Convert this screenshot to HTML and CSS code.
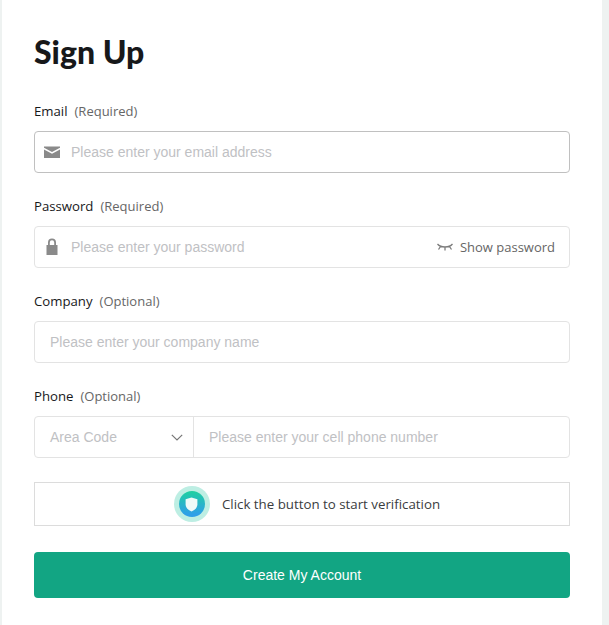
FILE: index.html
```html
<!DOCTYPE html>
<html lang="en">
<head>
<meta charset="utf-8">
<title>Sign Up</title>
<link rel="stylesheet" href="styles.css">
</head>
<body>
<main class="card">
  <h1 class="title">Sign Up</h1>
  <form class="form">
    <div class="field">
      <label class="label">Email<span class="hint">(Required)</span></label>
      <div class="box box-active">
        <svg class="lead-icon" viewBox="0 0 16 14" width="16" height="14"><path d="M0 1.500h16v1.200L8 7 0 2.700zM0 4.400 8 8.700l8-4.300V13H0z" fill="#8a8a8a"/></svg>
        <input class="input" type="text" placeholder="Please enter your email address">
      </div>
    </div>
    <div class="field">
      <label class="label">Password<span class="hint">(Required)</span></label>
      <div class="box">
        <svg class="lead-icon" viewBox="0 0 16 18" width="16" height="18"><path d="M8 .5a4 4 0 0 0-4 4V7H2.500v10h11V7H12V4.500a4 4 0 0 0-4-4zM10.200 7H5.800V4.500a2.200 2.200 0 0 1 4.400 0z" fill="#8a8a8a"/></svg>
        <input class="input" type="password" placeholder="Please enter your password">
        <span class="show">
          <svg viewBox="0 0 16 8" width="16" height="8"><path d="M.5 1C4 5 12 5 15.500 1M3.500 3.500 1.500 6.500M8 4.500V7.500M12.500 3.500l2 3" fill="none" stroke="#7c7c7c" stroke-width="1.300"/></svg>
          Show password
        </span>
      </div>
    </div>
    <div class="field">
      <label class="label">Company<span class="hint">(Optional)</span></label>
      <div class="box box-plain">
        <input class="input" type="text" placeholder="Please enter your company name">
      </div>
    </div>
    <div class="field">
      <label class="label">Phone<span class="hint">(Optional)</span></label>
      <div class="box box-phone">
        <div class="area">
          <span class="area-text">Area Code</span>
          <svg viewBox="0 0 12 7" width="12" height="7"><path d="M.8.8 6 6l5.200-5.200" fill="none" stroke="#777" stroke-width="1.200"/></svg>
        </div>
        <input class="input phone-input" type="text" placeholder="Please enter your cell phone number">
      </div>
    </div>
    <div class="verify">
      <span class="verify-icon">
        <span class="verify-disc">
          <svg viewBox="0 0 12 14" width="13" height="15"><path d="M6 .5 11.500 2v5c0 3-2.500 5.300-5.500 6.500C3 12.300.5 10 .5 7V2z" fill="#eefaf8"/></svg>
        </span>
      </span>
      <span class="verify-text">Click the button to start verification</span>
    </div>
    <button class="submit" type="button">Create My Account</button>
  </form>
</main>
</body>
</html>
```

FILE: styles.css
```css
* { box-sizing: border-box; }
html, body { height: 100%; }
body {
  margin: 0;
  background: #eef2f1;
  font-family: "Liberation Sans", Arial, sans-serif;
}
.card {
  width: 600px;
  height: 625px;
  margin-left: 2px;
  background: #fff;
  padding: 32px 32px 0;
}
.title {
  margin: 0 0 28px;
  font-family: "Lato", sans-serif;
  font-size: 32px;
  line-height: 40px;
  font-weight: 900;
  color: #17181a;
}
.form { display: flex; flex-direction: column; }
.field { margin-bottom: 22px; }
.label {
  display: block;
  height: 22px;
  line-height: 22px;
  margin-bottom: 9px;
  font-family: "Open Sans", sans-serif;
  font-size: 13.2px;
  font-weight: 500;
  color: #17181a;
}
.hint { margin-left: 7px; font-size: 13px; font-weight: 400; color: #666; }
.box {
  display: flex;
  align-items: center;
  height: 42px;
  border: 1px solid #e3e3e3;
  border-radius: 4px;
  padding-left: 9px;
  padding-right: 14px;
  background: #fff;
}
.box-active { border-color: #c0c0c0; }
.box-plain { padding-left: 15px; }
.box-phone { padding: 0; }
.lead-icon { flex: none; margin-right: 11px; }
.input {
  flex: 1;
  min-width: 0;
  border: 0;
  outline: 0;
  padding: 0;
  background: transparent;
  font-family: "Liberation Sans", Arial, sans-serif;
  font-size: 14px;
  color: #333;
}
.input::placeholder { color: #bfc1c4; opacity: 1; }
.show {
  display: flex;
  align-items: center;
  gap: 7px;
  font-family: "Open Sans", sans-serif;
  font-size: 13px;
  color: #666;
}
.area {
  flex: none;
  width: 159px;
  height: 100%;
  display: flex;
  align-items: center;
  justify-content: space-between;
  padding: 0 10px 0 15px;
  border-right: 1px solid #e3e3e3;
}
.area-text { font-size: 14px; color: #bfc1c4; }
.phone-input { padding-left: 15px; }
.verify {
  display: flex;
  align-items: center;
  justify-content: center;
  height: 44px;
  border: 1px solid #dcdcdc;
  margin-top: 2px;
  margin-bottom: 26px;
  gap: 12px;
  padding-left: 10px;
}
.verify-icon {
  width: 36px;
  height: 36px;
  border-radius: 50%;
  background: #bdeee3;
  display: flex;
  align-items: center;
  justify-content: center;
}
.verify-disc {
  width: 26px;
  height: 26px;
  border-radius: 50%;
  background: linear-gradient(180deg, #1fd0a0 0%, #2f9fe8 90%);
  display: flex;
  align-items: center;
  justify-content: center;
}
.verify-text {
  font-family: "Open Sans", sans-serif;
  font-size: 13.3px;
  color: #3a3c40;
}
.submit {
  height: 46px;
  border: 0;
  border-radius: 4px;
  background: #12a583;
  color: #fff;
  font-family: "Liberation Sans", Arial, sans-serif;
  font-size: 14px;
}
```
